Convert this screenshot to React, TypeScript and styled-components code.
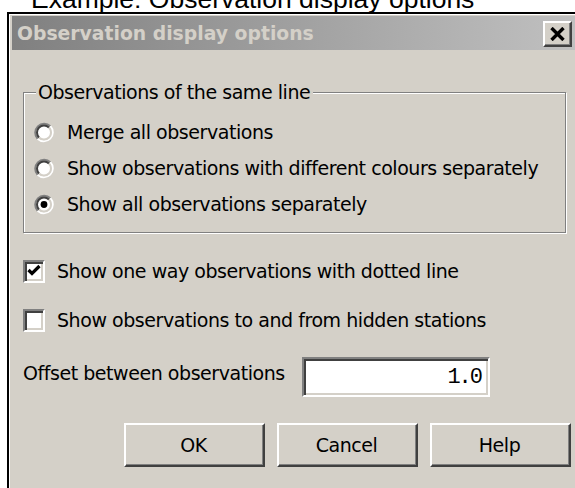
import styled, { createGlobalStyle } from 'styled-components';

const GlobalStyle = createGlobalStyle`
  html, body {
    margin: 0;
    padding: 0;
    background: #ffffff;
    overflow: hidden;
  }
`;

const face = {
  light: '#ffffff',
  base: '#d4d0c8',
  shadow: '#808080',
  dark: '#404040',
};

const radioOptions = [
  { label: 'Merge all observations', checked: false },
  { label: 'Show observations with different colours separately', checked: false },
  { label: 'Show all observations separately', checked: true },
];

const checkOptions = [
  { label: 'Show one way observations with dotted line', checked: true },
  { label: 'Show observations to and from hidden stations', checked: false },
];

export default function App() {
  return (
    <>
      <GlobalStyle />
      <Page>
        <Caption>Example: Observation display options</Caption>
        <Window>
          <TitleBar>
            <TitleText>Observation display options</TitleText>
            <CloseButton type="button" aria-label="Close">
              <svg width="15" height="14" viewBox="0 0 15 14">
                <path d="M1.5 1 L13.5 13 M13.5 1 L1.5 13" stroke="#000" strokeWidth="3.4" fill="none" />
              </svg>
            </CloseButton>
          </TitleBar>

          <Content>
            <GroupBox>
              <GroupLabel>Observations of the same line</GroupLabel>
              {radioOptions.map(option => (
                <RadioRow key={option.label}>
                  <RadioMark checked={option.checked} />
                  <span>{option.label}</span>
                </RadioRow>
              ))}
            </GroupBox>

            <CheckList>
              {checkOptions.map(option => (
                <CheckRow key={option.label}>
                  <CheckBox>
                    {option.checked && (
                      <svg width="14" height="14" viewBox="0 0 14 14">
                        <path d="M1.5 6 L5 9.5 L12.5 2" stroke="#000" strokeWidth="3.2" fill="none" />
                      </svg>
                    )}
                  </CheckBox>
                  <span>{option.label}</span>
                </CheckRow>
              ))}
            </CheckList>

            <OffsetRow>
              <OffsetLabel>Offset between observations</OffsetLabel>
              <ValueBox>1.0</ValueBox>
            </OffsetRow>

            <ButtonRow>
              <PushButton type="button">OK</PushButton>
              <PushButton type="button">Cancel</PushButton>
              <PushButton type="button">Help</PushButton>
            </ButtonRow>
          </Content>
        </Window>
      </Page>
    </>
  );
}

const RadioMark = ({ checked }: { checked?: boolean }) => (
  <svg width="22" height="21" viewBox="0 0 22 21">
    <circle cx="11" cy="10.5" r="7" fill="#fff" />
    <path d="M4.64 16.86 A9 9 0 0 1 17.36 4.14" stroke={face.shadow} strokeWidth="2" fill="none" />
    <path d="M17.36 4.14 A9 9 0 0 1 4.64 16.86" stroke={face.light} strokeWidth="2" fill="none" />
    <path d="M6.05 15.45 A7 7 0 0 1 15.95 5.55" stroke={face.dark} strokeWidth="2" fill="none" />
    <path d="M15.95 5.55 A7 7 0 0 1 6.05 15.45" stroke={face.base} strokeWidth="2" fill="none" />
    {checked && <circle cx="11" cy="10.5" r="3.4" fill="#000" />}
  </svg>
);

const Page = styled.div`
  width: 575px;
  height: 488px;
  overflow: hidden;
  background: #ffffff;
`;

const Caption = styled.div`
  margin: -14px 0 0 31px;
  height: 26px;
  color: #000;
  font-family: 'Liberation Sans', Arial, sans-serif;
  font-size: 26.5px;
  line-height: 26px;
  white-space: nowrap;
`;

const Window = styled.div`
  background: ${face.base};
  border-left: 2px solid #000;
  border-top: 2px solid #000;
  box-shadow: inset 1px 1px 0 ${face.light};
  box-sizing: border-box;
  height: 490px;
  margin-left: 7px;
  padding: 2px 5px 0 3px;
  width: 574px;
`;

const TitleBar = styled.div`
  align-items: center;
  background: linear-gradient(to right, #808080, #c0c0c0);
  display: flex;
  height: 34px;
  justify-content: space-between;
  padding: 1px 4px 0 5px;
  box-sizing: border-box;
`;

const TitleText = styled.span`
  color: ${face.base};
  font-family: 'DejaVu Sans', Verdana, sans-serif;
  font-size: 18.8px;
  font-weight: 700;
  letter-spacing: 0;
  white-space: nowrap;
`;

const raised = `
  background: ${face.base};
  border-bottom: 2px solid ${face.dark};
  border-left: 2px solid ${face.light};
  border-right: 2px solid ${face.dark};
  border-top: 2px solid ${face.light};
  box-shadow: inset -1px -1px 0 ${face.shadow};
  box-sizing: border-box;
`;

const sunken = `
  background: #ffffff;
  border-bottom: 2px solid ${face.light};
  border-left: 2px solid ${face.shadow};
  border-right: 2px solid ${face.light};
  border-top: 2px solid ${face.shadow};
  box-shadow: inset 2px 2px 0 ${face.dark}, inset -2px -2px 0 ${face.base};
  box-sizing: border-box;
`;

const CloseButton = styled.button`
  ${raised}
  align-items: center;
  display: flex;
  height: 26px;
  justify-content: center;
  padding: 0;
  width: 29px;
`;

const Content = styled.div`
  align-items: flex-start;
  color: #000;
  display: flex;
  flex-direction: column;
  font-family: 'DejaVu Sans', Verdana, sans-serif;
  font-size: 19px;
  letter-spacing: -0.45px;
  padding: 30px 0 0 11px;
`;

const GroupBox = styled.fieldset`
  border: 1px solid ${face.shadow};
  box-shadow: 1px 1px 0 ${face.light}, inset 1px 1px 0 ${face.light};
  box-sizing: border-box;
  margin: 0;
  min-inline-size: auto;
  padding: 10px 0 10px 9px;
  width: 543px;
`;

const GroupLabel = styled.legend`
  background: ${face.base};
  line-height: 24px;
  margin-left: 3px;
  padding: 0 3px 0 2px;
`;

const RadioRow = styled.div`
  align-items: center;
  display: flex;
  gap: 12px;
  height: 36px;
  white-space: nowrap;
`;

const CheckList = styled.div`
  display: flex;
  flex-direction: column;
  gap: 25px;
  margin-top: 26px;
`;

const CheckRow = styled.div`
  align-items: center;
  display: flex;
  gap: 12px;
  height: 24px;
  white-space: nowrap;
`;

const CheckBox = styled.div`
  ${sunken}
  align-items: center;
  display: flex;
  height: 23px;
  justify-content: center;
  width: 22px;
`;

const OffsetRow = styled.div`
  align-items: flex-start;
  display: flex;
  margin-top: 25px;
`;

const OffsetLabel = styled.span`
  line-height: 24px;
  padding-top: 4px;
  white-space: nowrap;
  width: 279px;
`;

const ValueBox = styled.div`
  ${sunken}
  align-items: center;
  display: flex;
  font-family: 'Liberation Mono', 'Courier New', monospace;
  font-size: 22px;
  height: 40px;
  justify-content: flex-end;
  letter-spacing: -2px;
  padding-right: 7px;
  width: 188px;
`;

const ButtonRow = styled.div`
  display: flex;
  gap: 12px;
  margin: 26px 0 0 101px;
`;

const PushButton = styled.button`
  ${raised}
  color: #000;
  font-family: inherit;
  font-size: inherit;
  height: 44px;
  letter-spacing: inherit;
  padding: 0 2px 0 0;
  width: 141px;
`;
